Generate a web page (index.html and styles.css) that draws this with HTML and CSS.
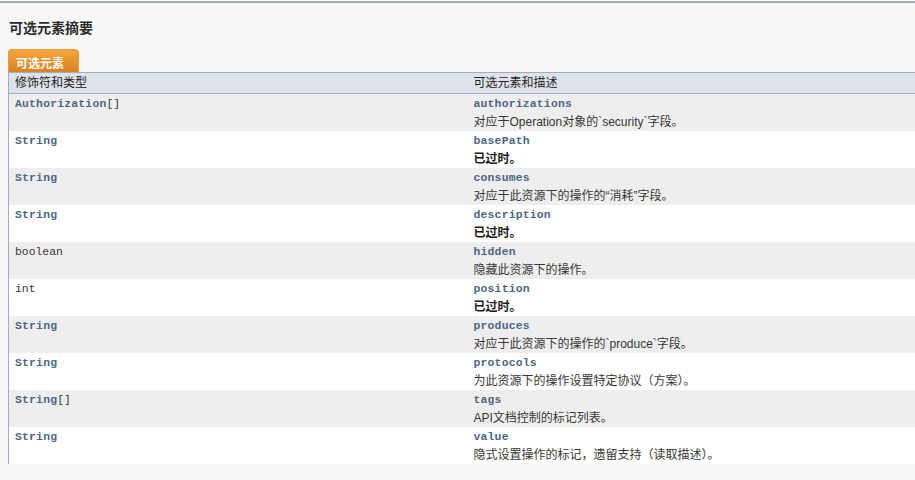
FILE: index.html
```html
<!DOCTYPE html>
<html lang="zh">
<head>
<meta charset="utf-8">
<link rel="stylesheet" href="styles.css">
</head>
<body>
<div class="summary">
  <h3 class="title">可选元素摘要</h3>
  <div class="caption"><span>可选元素</span></div>
  <table class="member-table">
    <colgroup><col class="c1"><col class="c2"></colgroup>
    <thead>
      <tr><th>修饰符和类型</th><th>可选元素和描述</th></tr>
    </thead>
    <tbody>
      <tr class="alt"><td><code><a class="lnk">Authorization</a>[]</code></td><td><code class="name">authorizations</code><div class="desc">对应于Operation对象的`security`字段。</div></td></tr>
      <tr><td><code><a class="lnk">String</a></code></td><td><code class="name">basePath</code><div class="desc dep">已过时。</div></td></tr>
      <tr class="alt"><td><code><a class="lnk">String</a></code></td><td><code class="name">consumes</code><div class="desc">对应于此资源下的操作的“消耗”字段。</div></td></tr>
      <tr><td><code><a class="lnk">String</a></code></td><td><code class="name">description</code><div class="desc dep">已过时。</div></td></tr>
      <tr class="alt"><td><code>boolean</code></td><td><code class="name">hidden</code><div class="desc">隐藏此资源下的操作。</div></td></tr>
      <tr><td><code>int</code></td><td><code class="name">position</code><div class="desc dep">已过时。</div></td></tr>
      <tr class="alt"><td><code><a class="lnk">String</a></code></td><td><code class="name">produces</code><div class="desc">对应于此资源下的操作的`produce`字段。</div></td></tr>
      <tr><td><code><a class="lnk">String</a></code></td><td><code class="name">protocols</code><div class="desc">为此资源下的操作设置特定协议（方案）。</div></td></tr>
      <tr class="alt"><td><code><a class="lnk">String</a>[]</code></td><td><code class="name">tags</code><div class="desc">API文档控制的标记列表。</div></td></tr>
      <tr><td><code><a class="lnk">String</a></code></td><td><code class="name">value</code><div class="desc">隐式设置操作的标记，遗留支持（读取描述）。</div></td></tr>
    </tbody>
  </table>
</div>
</body>
</html>
```
FILE: styles.css
```css
html, body {
  margin: 0;
  padding: 0;
  background: #f8f8f8;
}
body {
  font-family: "Liberation Sans", "Noto Sans CJK SC", sans-serif;
  font-size: 12px;
  color: #353833;
  overflow: hidden;
}
.summary {
  border-top: 1px solid #ffffff;
  background: #f8f8f8;
  padding: 0 0 0 8px;
  min-height: 480px;
  box-sizing: border-box;
}
.title {
  margin: 0;
  border-top: 2px solid #9eadc0;
  padding: 16px 0 0 1px;
  margin-left: -8px;
  padding-left: 9px;
  height: 48px;
  box-sizing: border-box;
  font-size: 14px;
  line-height: 18px;
  font-weight: bold;
  color: #2c2c2c;
}
.caption {
  height: 23px;
}
.caption span {
  display: inline-block;
  box-sizing: border-box;
  width: 71px;
  height: 23px;
  padding: 6px 0 0 7px;
  line-height: 16px;
  font-weight: bold;
  color: #ffffff;
  border-radius: 4px 4px 0 0;
  background: linear-gradient(#f6a43c, #d98320);
  border: 1px solid #e89a35;
  border-bottom: none;
}
.member-table {
  border-collapse: collapse;
  border-spacing: 0;
  width: 920px;
  table-layout: fixed;
  border-left: 1px solid #9eadc0;
}
.c1 { width: 459px; }
.member-table th {
  background: #dee3e9;
  border-top: 1px solid #9eadc0;
  border-bottom: 1px solid #9eadc0;
  height: 20px;
  padding: 0 0 0 6px;
  text-align: left;
  font-weight: normal;
  line-height: 20px;
  color: #222222;
  vertical-align: middle;
}
.member-table td {
  vertical-align: top;
  padding: 3px 0 2px 6px;
  height: 37px;
  box-sizing: border-box;
  background: #ffffff;
}
.member-table tr.alt td {
  background: #eeeeee;
}
code {
  font-family: "Liberation Mono", "DejaVu Sans Mono", monospace;
  font-size: 11.4px;
  line-height: 14px;
  color: #353833;
  display: block;
}
.lnk {
  color: #4a6782;
  font-weight: bold;
  letter-spacing: 0.2px;
}
.name {
  color: #4a6782;
  font-weight: bold;
  letter-spacing: 0.2px;
}
.desc {
  margin-top: 4px;
  line-height: 14px;
  font-size: 12px;
  color: #353833;
}
.desc.dep {
  font-weight: bold;
  color: #1a1a1a;
}
```
